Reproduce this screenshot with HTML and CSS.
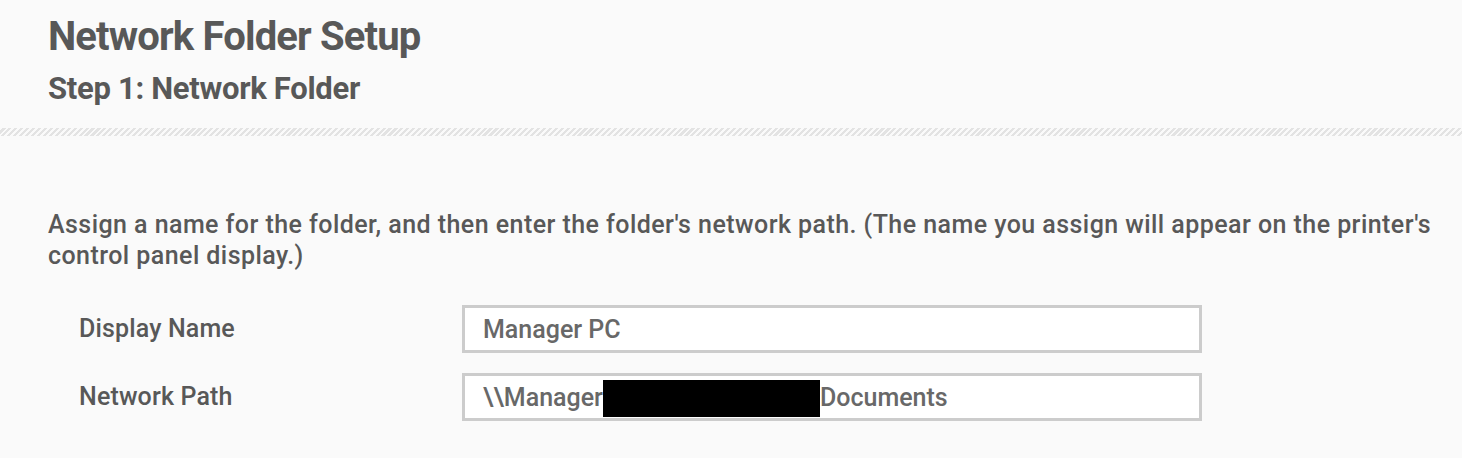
FILE: index.html
```html
<!DOCTYPE html>
<html lang="en">
<head>
<meta charset="utf-8">
<title>Network Folder Setup</title>
<link rel="stylesheet" href="styles.css">
</head>
<body>
<header class="page-header">
  <h1 class="title">Network Folder Setup</h1>
  <h2 class="subtitle">Step 1: Network Folder</h2>
</header>
<div class="hatch"></div>
<main class="content">
  <p class="intro">Assign a name for the folder, and then enter the folder's network path. (The name you assign will appear on the printer's control panel display.)</p>
  <div class="form">
    <div class="row">
      <div class="label">Display Name</div>
      <div class="field">Manager PC</div>
    </div>
    <div class="row">
      <div class="label">Network Path</div>
      <div class="field">\\Manager<span class="redact"></span>Documents</div>
    </div>
  </div>
</main>
</body>
</html>
```
FILE: styles.css
```css
html, body {
  margin: 0;
  padding: 0;
}
body {
  background: #fafafa;
  font-family: Roboto, "Liberation Sans", sans-serif;
  color: #585858;
  width: 1462px;
  height: 458px;
  overflow: hidden;
}
.page-header {
  padding: 13px 0 0 48px;
}
.title {
  margin: 0;
  font-size: 40px;
  line-height: 48px;
  font-weight: 700;
  letter-spacing: -0.85px;
}
.subtitle {
  margin: 8px 0 0;
  font-size: 31px;
  line-height: 40px;
  font-weight: 700;
  letter-spacing: -0.3px;
}
.hatch {
  margin-top: 19px;
  height: 8px;
  background: repeating-linear-gradient(-45deg, #fafafa 0px, #fafafa 2px, #e3e3e3 2px, #e3e3e3 4.2px);
}
.content {
  padding: 0 0 0 48px;
}
.intro {
  margin: 73px 10px 0 0;
  font-size: 25px;
  line-height: 31px;
  font-weight: 500;
  letter-spacing: 0.44px;
}
.form {
  margin-top: 34px;
  display: flex;
  flex-direction: column;
  gap: 20px;
}
.row {
  display: flex;
  align-items: center;
  height: 48px;
}
.label {
  width: 383px;
  padding-left: 31px;
  font-size: 25px;
  line-height: 50px;
  font-weight: 500;
  letter-spacing: 0.15px;
}
.field {
  box-sizing: border-box;
  width: 740px;
  height: 48px;
  border: 3px solid #cccccc;
  background: #ffffff;
  padding: 2px 0 0 18px;
  font-size: 25px;
  line-height: 40px;
  font-weight: 500;
  color: #686868;
  white-space: nowrap;
  display: flex;
  align-items: center;
}
.redact {
  display: inline-block;
  width: 217px;
  height: 37px;
  background: #000;
}
```
